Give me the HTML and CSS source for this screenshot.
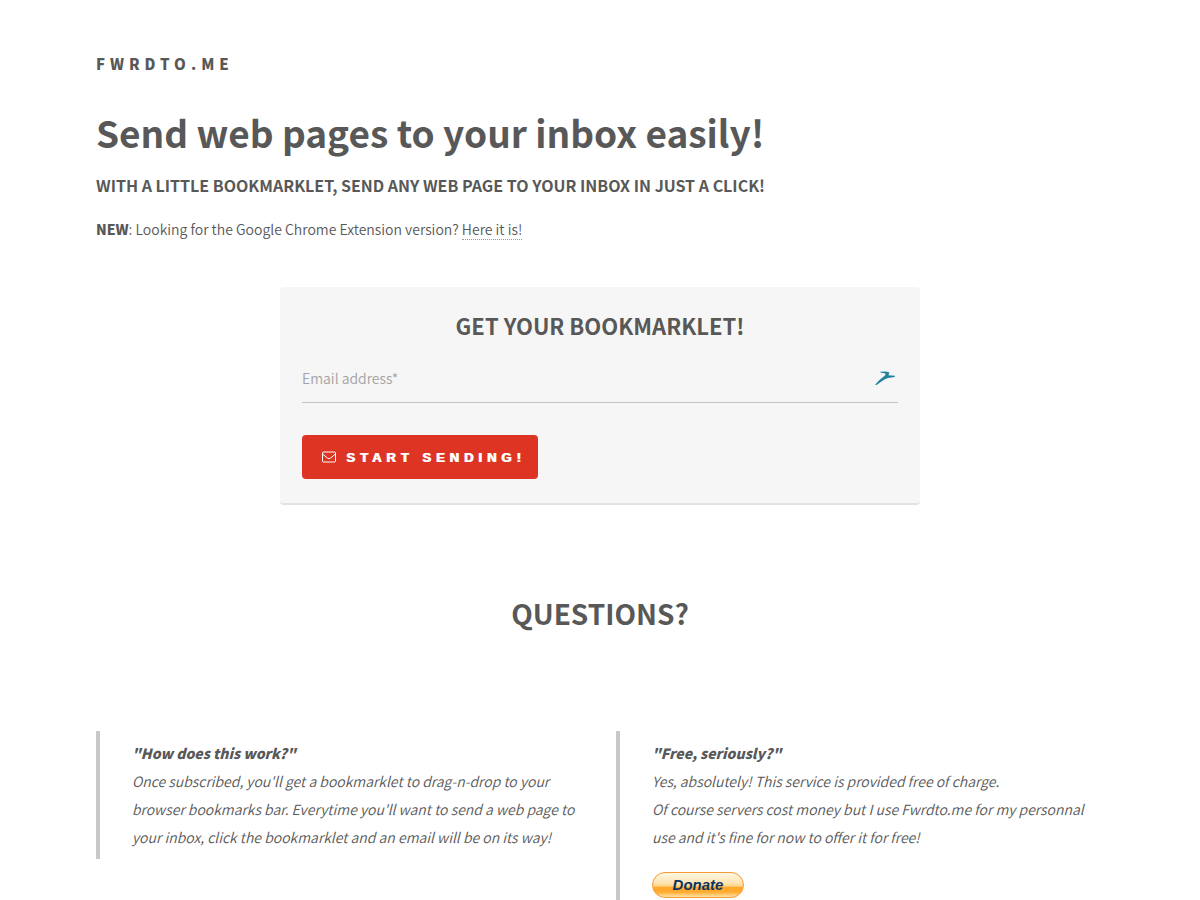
FILE: index.html
```html
<!DOCTYPE html>
<html lang="en">
<head>
<meta charset="utf-8">
<meta name="viewport" content="width=device-width, initial-scale=1">
<title>Fwrdto.me</title>
<link rel="stylesheet" href="styles.css">
</head>
<body>
<div class="page">
  <header class="intro">
    <p class="brand">Fwrdto.me</p>
    <h1 class="headline">Send web pages to your inbox easily!</h1>
    <h2 class="tagline">With a little bookmarklet, send any web page to your inbox in just a click!</h2>
    <p class="news"><strong>NEW</strong>: Looking for the Google Chrome Extension version? <a class="news-link" href="#extension">Here it is!</a></p>
  </header>
  <main>
    <form class="card">
      <h2 class="card-title">Get your bookmarklet!</h2>
      <div class="field">
        <input class="field-input" type="email" name="email" placeholder="Email address*" aria-label="Email address" required>
        <svg class="field-icon" viewBox="0 0 20 14" aria-hidden="true"><path d="M5 0.8 11 0.5 14.5 1.4 13.4 4.2 20 4.8 19.6 6 13 6.9 9.4 8.6 5 11.4 1.6 14 0.2 13.6 5 8.6 10 4.6 10.6 2.6 6 1.8Z"/></svg>
      </div>
      <button class="submit" type="submit">
        <svg class="submit-icon" viewBox="0 0 14 12" aria-hidden="true"><rect x="0.5" y="1" width="13" height="10" rx="1"/><path d="M0.8 3.2 5.6 7.2Q7 8.2 8.4 7.2L13.2 3.2"/></svg>
        <span>Start sending!</span>
      </button>
    </form>
    <section class="faq">
      <h2 class="faq-title">Questions?</h2>
      <div class="faq-grid">
        <blockquote class="quote">
          <p><strong>"How does this work?"</strong><br>Once subscribed, you'll get a bookmarklet to drag-n-drop to your browser bookmarks bar. Everytime you'll want to send a web page to your inbox, click the bookmarklet and an email will be on its way!</p>
        </blockquote>
        <blockquote class="quote">
          <p><strong>"Free, seriously?"</strong><br>Yes, absolutely! This service is provided free of charge.<br>Of course servers cost money but I use Fwrdto.me for my personnal use and it's fine for now to offer it for free!</p>
          <button class="donate" type="button">Donate</button>
        </blockquote>
      </div>
    </section>
  </main>
</div>
</body>
</html>
```
FILE: styles.css
```css
* { box-sizing: border-box; }

body, h1, h2, p, blockquote { margin: 0; }

body {
  background: #fff;
  color: #585858;
  font-family: "Noto Sans CJK JP", "Noto Sans", sans-serif;
  font-size: 14px;
  font-weight: 350;
  line-height: 28px;
}

strong { font-weight: 900; }

.page { padding: 50px 8% 0; }

.brand {
  font-size: 15px;
  font-weight: 900;
  letter-spacing: 5px;
  text-transform: uppercase;
}

.headline {
  margin-top: 26px;
  font-size: 37px;
  font-weight: 700;
  line-height: 56px;
}

.tagline {
  margin-top: 11px;
  font-size: 16px;
  font-weight: 700;
  line-height: 28px;
  text-transform: uppercase;
}

.news { margin-top: 16px; }

.news-link {
  border-bottom: 1px dotted #999;
  color: inherit;
  text-decoration: none;
}

.card {
  max-width: 640px;
  margin: 44px auto 0;
  padding: 22px 22px 24px;
  border-bottom: 2px solid #e2e2e2;
  border-radius: 4px;
  background: #f6f6f6;
}

.card-title {
  font-size: 22px;
  font-weight: 700;
  line-height: 32px;
  text-align: center;
  text-transform: uppercase;
}

.field {
  display: flex;
  align-items: center;
  height: 50px;
  margin: 12px 0 32px;
  padding-right: 3px;
  border-bottom: 1px solid #c4c4c4;
}

.field-input {
  flex: 1;
  min-width: 0;
  padding: 0;
  border: 0;
  outline: 0;
  background: none;
  color: inherit;
  font: inherit;
}

.field-input::placeholder { color: #a3a3a3; }

.field-icon {
  width: 20px;
  height: 14px;
  fill: #23829b;
}

.submit {
  display: flex;
  align-items: center;
  gap: 10px;
  height: 44px;
  padding: 0 12px 0 20px;
  border: 0;
  border-radius: 4px;
  background: #de3423;
  color: #fff;
  font-family: "Liberation Sans", Arial, sans-serif;
  font-size: 13px;
  font-weight: 900;
  letter-spacing: 5px;
  text-shadow: 1px 0 #fff;
  text-transform: uppercase;
}

.submit-icon {
  width: 14px;
  height: 12px;
  fill: none;
  stroke: #fff;
}

.faq-title {
  margin-top: 84px;
  font-size: 28px;
  font-weight: 700;
  line-height: 48px;
  text-align: center;
  text-transform: uppercase;
}

.faq-grid {
  display: grid;
  grid-template-columns: 1fr 1fr;
  align-items: start;
  gap: 32px;
  margin-top: 94px;
}

.quote {
  padding: 8px 0 8px 32px;
  border-left: 4px solid #c8c8c8;
  font-style: italic;
}

.donate {
  display: block;
  width: 92px;
  height: 26px;
  margin-top: 21px;
  padding: 0;
  border: 1px solid #f79a32;
  border-radius: 13px;
  background: linear-gradient(#fff7e4 0%, #fde5b4 40%, #fdd385 55%, #ffa726 60%, #ffac35 80%, #ffe3a8 100%);
  color: #0b3463;
  font-family: "Liberation Sans", Arial, sans-serif;
  font-size: 15px;
  font-style: italic;
  font-weight: 700;
  line-height: 24px;
}

@media (max-width: 736px) {
  .faq-grid { grid-template-columns: 1fr; }
}
```
